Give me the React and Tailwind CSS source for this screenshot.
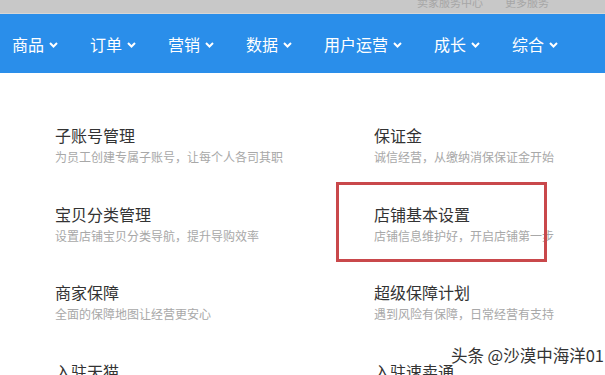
import React from "react";

const navs = ["商品", "订单", "营销", "数据", "用户运营", "成长", "综合"];

const rows = [
  [
    { t: "子账号管理", d: "为员工创建专属子账号，让每个人各司其职" },
    { t: "保证金", d: "诚信经营，从缴纳消保保证金开始" },
  ],
  [
    { t: "宝贝分类管理", d: "设置店铺宝贝分类导航，提升导购效率" },
    { t: "店铺基本设置", d: "店铺信息维护好，开启店铺第一步", hl: true },
  ],
  [
    { t: "商家保障", d: "全面的保障地图让经营更安心" },
    { t: "超级保障计划", d: "遇到风险有保障，日常经营有支持" },
  ],
  [
    { t: "入驻天猫", d: "" },
    { t: "入驻速卖通", d: "" },
  ],
];

function Chevron() {
  return (
    <svg width="9" height="6" viewBox="0 0 9 6" className="ml-[5px] mt-[2px]">
      <path d="M1 1 L4.5 4.5 L8 1" fill="none" stroke="white" strokeWidth="2" />
    </svg>
  );
}

function Item({ t, d, hl }) {
  return (
    <div className="relative">
      {hl && (
        <div className="absolute left-[-38px] top-[-22px] w-[211px] h-[80px] border-[3px] border-[#c9484b]" />
      )}
      <div className="text-[16px] leading-[20px] text-[#333]">{t}</div>
      <div className="mt-[4px] text-[12px] leading-[16px] text-[#a8a8a8] whitespace-nowrap">{d}</div>
    </div>
  );
}

export default function App() {
  return (
    <div
      className="relative w-[605px] h-[375px] overflow-hidden bg-white"
      style={{ fontFamily: '"Noto Sans CJK SC", "Noto Sans", sans-serif' }}
    >
      <div className="h-[14px] bg-[#c8c8c8] border-b border-[#d6d6d6] flex items-start overflow-hidden">
        <div className="flex gap-[22px] text-[11px] leading-[11px] text-[#a6a6a6] mt-[-3px] ml-[417px] whitespace-nowrap">
          <span>卖家服务中心</span>
          <span>更多服务</span>
        </div>
      </div>
      <div className="h-[59px] bg-[#2a8eea] flex items-center pl-[12px] gap-[32px]">
        {navs.map((n) => (
          <div key={n} className="flex items-center text-white text-[16px] leading-[20px]">
            <span>{n}</span>
            <Chevron />
          </div>
        ))}
      </div>
      <div className="pt-[52px] pl-[55px] flex flex-col gap-[38.5px]">
        {rows.map((r, i) => (
          <div key={i} className="grid grid-cols-[319px_1fr]">
            <Item {...r[0]} />
            <Item {...r[1]} />
          </div>
        ))}
      </div>
      <div
        className="absolute right-[1px] top-[345px] text-[16.5px] leading-[20px] text-[#333] whitespace-nowrap"
        style={{ textShadow: "0 0 2px #fff, 0 0 2px #fff" }}
      >
        头条 @沙漠中海洋01
      </div>
    </div>
  );
}
